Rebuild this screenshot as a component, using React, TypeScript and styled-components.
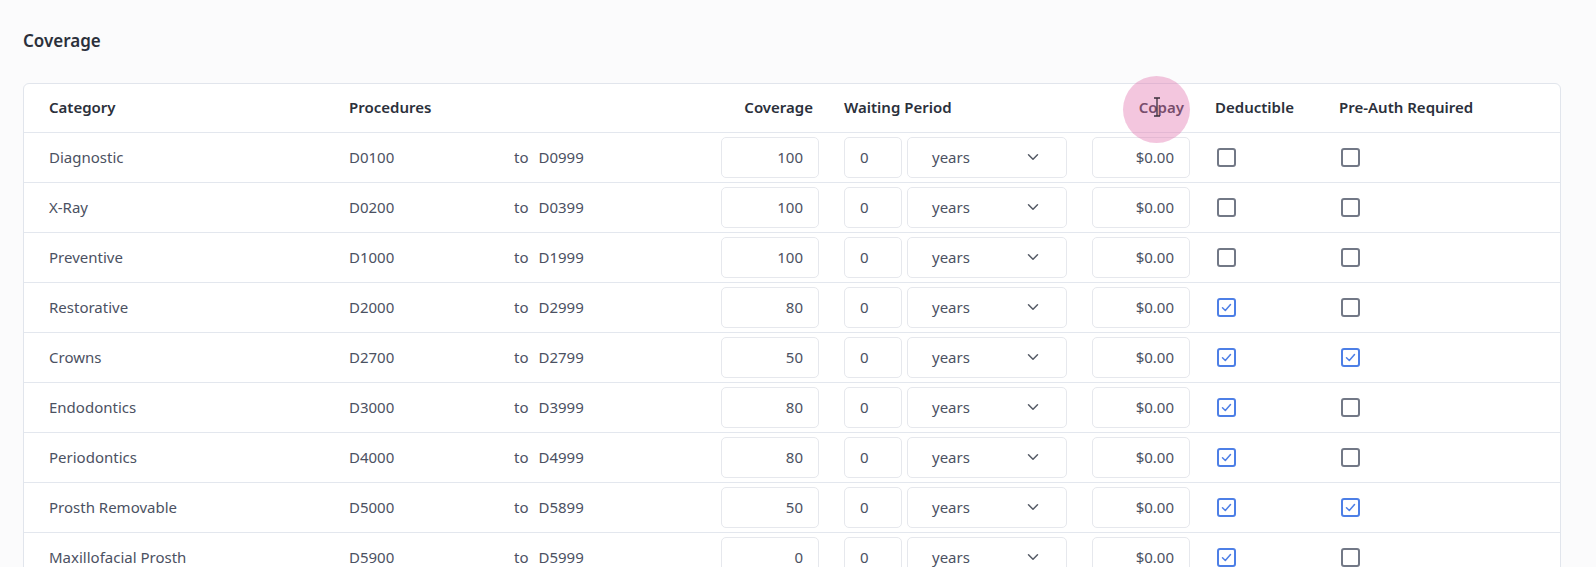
import React from 'react';
import styled, { createGlobalStyle } from 'styled-components';
import { ChevronDown } from 'lucide-react';

const Global = createGlobalStyle`
  html, body { margin: 0; padding: 0; background: #fbfbfc; }
  body { font-family: "Noto Sans", "Open Sans", sans-serif; color: #4b5162; }
  * { box-sizing: border-box; }
`;

const Page = styled.div`
  padding: 29px 35px 0 23px;
  position: relative;
`;

const Title = styled.h2`
  margin: 0 0 30px 0;
  font-size: 17px;
  line-height: 24px;
  font-weight: 600;
  color: #2b303b;
`;

const Table = styled.div`
  background: #ffffff;
  border: 1px solid #e1e5ec;
  border-radius: 6px;
  overflow: hidden;
`;

const Row = styled.div<{ $head?: boolean }>`
  display: grid;
  grid-template-columns: 275px 140px 182px 98px 223px 98px 99px 1fr;
  column-gap: 25px;
  align-items: center;
  padding-left: 25px;
  height: ${p => (p.$head ? 49 : 50)}px;
  border-bottom: 1px solid #e3e7ee;
  font-size: 15px;
  line-height: 20px;
`;

const HeadCell = styled.div<{ $right?: boolean }>`
  font-weight: 600;
  color: #2b303b;
  text-align: ${p => (p.$right ? 'right' : 'left')};
  padding-right: ${p => (p.$right ? '6px' : '0')};
  padding-bottom: 2px;
  white-space: nowrap;
`;

const Cell = styled.div`
  color: #4b5162;
  white-space: nowrap;
  padding-bottom: 2px;
`;

const CheckCell = styled.div`
  display: flex;
  align-items: center;
  padding-left: 2px;
`;

const ToText = styled.span`
  margin-right: 10px;
`;

const Input = styled.div<{ $align?: 'left' | 'right' }>`
  height: 41px;
  background: #ffffff;
  border: 1px solid #e6e8ed;
  border-radius: 5px;
  display: flex;
  align-items: center;
  justify-content: ${p => (p.$align === 'left' ? 'flex-start' : 'flex-end')};
  padding: 0 15px 2px 15px;
  color: #4b5162;
  font-size: 15px;
`;

const Waiting = styled.div`
  display: grid;
  grid-template-columns: 58px 1fr;
  column-gap: 5px;
`;

const Select = styled.div`
  height: 41px;
  background: #ffffff;
  border: 1px solid #e6e8ed;
  border-radius: 5px;
  display: flex;
  align-items: center;
  justify-content: space-between;
  padding: 0 24px 2px 24px;
  color: #4b5162;
  font-size: 15px;
`;

const Box = styled.span<{ $on?: boolean }>`
  display: inline-flex;
  align-items: center;
  justify-content: center;
  width: 19px;
  height: 19px;
  border: 2px solid ${p => (p.$on ? '#4d7fe6' : '#727886')};
  border-radius: 3px;
  background: #ffffff;
`;

const Highlight = styled.div`
  position: absolute;
  left: 1123px;
  top: 76px;
  width: 67px;
  height: 67px;
  border-radius: 50%;
  background: rgba(226, 120, 176, 0.42);
  pointer-events: none;
`;

const Cursor = styled.svg`
  position: absolute;
  left: 1153px;
  top: 97px;
  pointer-events: none;
`;

type R = { cat: string; from: string; to: string; cov: string; ded: boolean; pre: boolean };

const rows: R[] = [
  { cat: 'Diagnostic', from: 'D0100', to: 'D0999', cov: '100', ded: false, pre: false },
  { cat: 'X-Ray', from: 'D0200', to: 'D0399', cov: '100', ded: false, pre: false },
  { cat: 'Preventive', from: 'D1000', to: 'D1999', cov: '100', ded: false, pre: false },
  { cat: 'Restorative', from: 'D2000', to: 'D2999', cov: '80', ded: true, pre: false },
  { cat: 'Crowns', from: 'D2700', to: 'D2799', cov: '50', ded: true, pre: true },
  { cat: 'Endodontics', from: 'D3000', to: 'D3999', cov: '80', ded: true, pre: false },
  { cat: 'Periodontics', from: 'D4000', to: 'D4999', cov: '80', ded: true, pre: false },
  { cat: 'Prosth Removable', from: 'D5000', to: 'D5899', cov: '50', ded: true, pre: true },
  { cat: 'Maxillofacial Prosth', from: 'D5900', to: 'D5999', cov: '0', ded: true, pre: false },
];

const Check: React.FC<{ on: boolean }> = ({ on }) => (
  <Box $on={on}>
    {on && (
      <svg width="13" height="13" viewBox="0 0 13 13">
        <path d="M2.5 6.8 L5.3 9.5 L10.5 3.5" fill="none" stroke="#4d7fe6" strokeWidth="1.5" strokeLinecap="round" strokeLinejoin="round" />
      </svg>
    )}
  </Box>
);

export default function App() {
  return (
    <>
      <Global />
      <Page>
        <Title>Coverage</Title>
        <Table>
          <Row $head>
            <HeadCell>Category</HeadCell>
            <HeadCell>Procedures</HeadCell>
            <HeadCell />
            <HeadCell $right>Coverage</HeadCell>
            <HeadCell>Waiting Period</HeadCell>
            <HeadCell $right>Copay</HeadCell>
            <HeadCell>Deductible</HeadCell>
            <HeadCell>Pre-Auth Required</HeadCell>
          </Row>
          {rows.map(r => (
            <Row key={r.cat}>
              <Cell>{r.cat}</Cell>
              <Cell>{r.from}</Cell>
              <Cell>
                <ToText>to</ToText>
                {r.to}
              </Cell>
              <Input>{r.cov}</Input>
              <Waiting>
                <Input $align="left">0</Input>
                <Select>
                  <span>years</span>
                  <ChevronDown size={18} color="#555b66" strokeWidth={2} />
                </Select>
              </Waiting>
              <Input>$0.00</Input>
              <CheckCell>
                <Check on={r.ded} />
              </CheckCell>
              <CheckCell>
                <Check on={r.pre} />
              </CheckCell>
            </Row>
          ))}
        </Table>
        <Highlight />
        <Cursor width="8" height="20" viewBox="0 0 8 20">
          <path d="M1 1 H7 M4 1 V19 M1 19 H7" stroke="#3a2f3a" strokeWidth="1.3" fill="none" />
        </Cursor>
      </Page>
    </>
  );
}
